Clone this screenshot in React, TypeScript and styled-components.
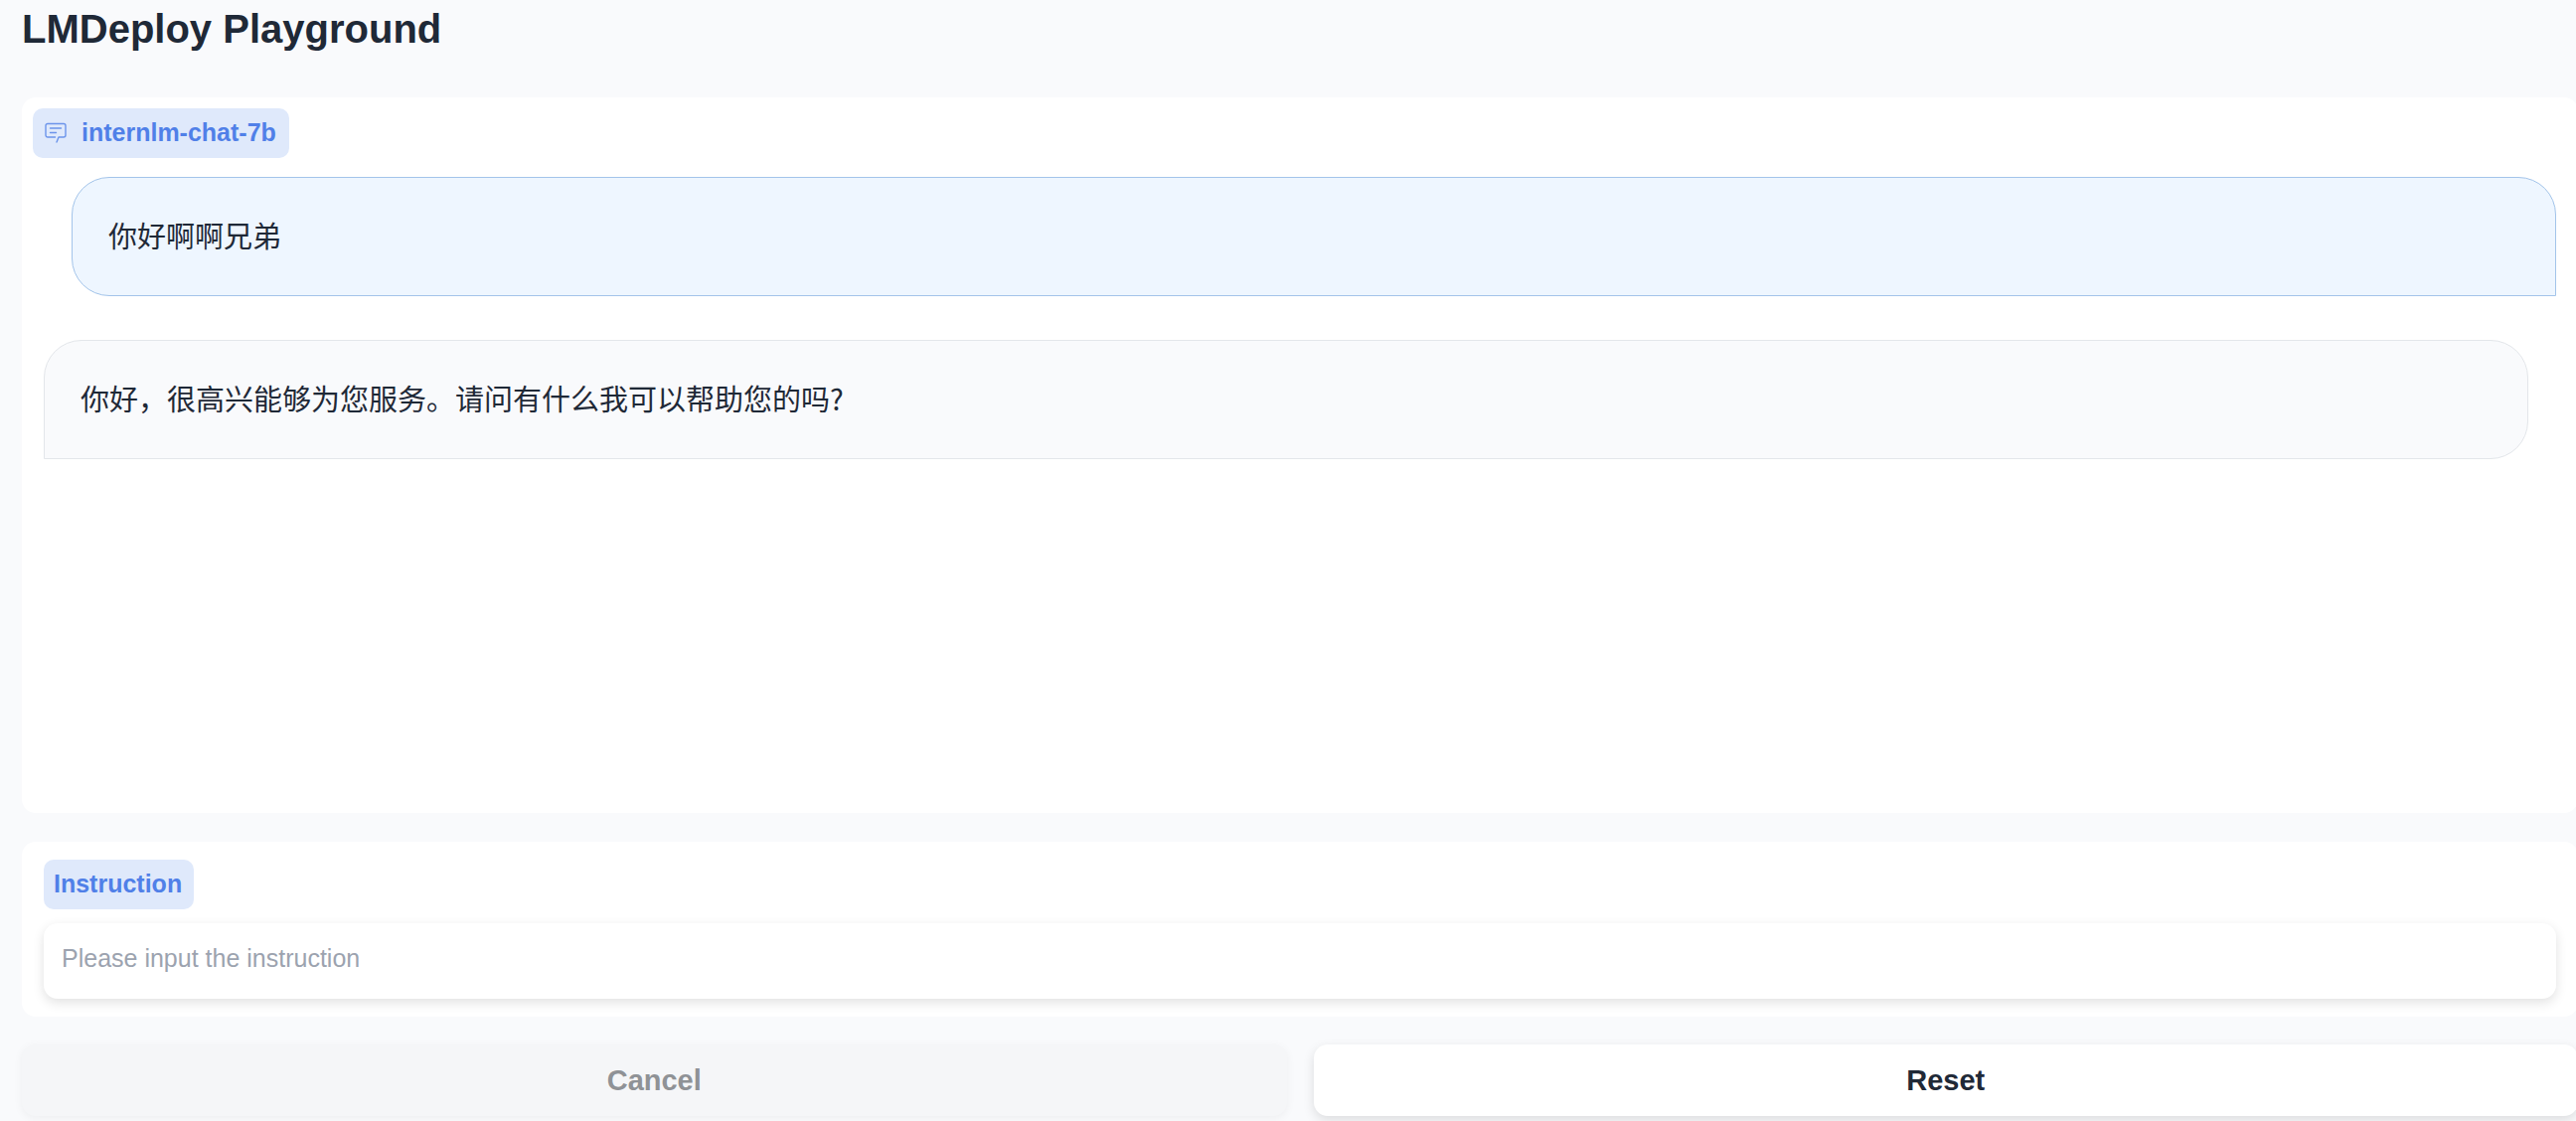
import React, { useState } from "react";
import styled, { createGlobalStyle } from "styled-components";

const GlobalStyle = createGlobalStyle`
  *, *::before, *::after { box-sizing: border-box; }
  body {
    margin: 0;
    background: #f9fafc;
    color: #1f2937;
    font-family: "Liberation Sans", Arial, "Noto Sans CJK SC", sans-serif;
    overflow: hidden;
  }
`;

const Page = styled.main`
  margin-right: -2px;
  padding: 6px 0 5px 22px;
`;

const Title = styled.h1`
  margin: 0 0 46px;
  font-size: 40px;
  line-height: 46px;
  font-weight: 700;
`;

const Panel = styled.section`
  background: #fff;
  border-radius: 14px;
`;

const ChatPanel = styled(Panel)`
  height: 720px;
  padding: 11px;
  margin-bottom: 29px;
`;

const InputPanel = styled(Panel)`
  display: flex;
  flex-direction: column;
  align-items: flex-start;
  gap: 14px;
  padding: 18px 22px;
  margin-bottom: 28px;
`;

const Tag = styled.div`
  display: inline-flex;
  align-items: center;
  gap: 15px;
  height: 50px;
  padding: 0 13px 2px 12px;
  border-radius: 10px;
  background: #dfe9fb;
  color: #5080e8;
  font-size: 25px;
  line-height: 30px;
  font-weight: 700;
`;

const FieldTag = styled(Tag).attrs({ as: "label" })<{ htmlFor?: string }>`
  padding: 0 12px 2px 10px;
`;

const Messages = styled.div`
  display: flex;
  flex-direction: column;
  gap: 44px;
  padding: 19px 11px 0;
`;

const Bubble = styled.div<{ $from: "user" | "bot" }>`
  padding: 35px 36px 39px;
  border: 1px solid ${(p) => (p.$from === "user" ? "#a3c4ea" : "#e3e6ea")};
  border-radius: ${(p) => (p.$from === "user" ? "38px 38px 0 38px" : "38px 38px 38px 0")};
  margin-left: ${(p) => (p.$from === "user" ? "28px" : "0")};
  margin-right: ${(p) => (p.$from === "user" ? "0" : "28px")};
  background: ${(p) => (p.$from === "user" ? "#eef6ff" : "#f9fafc")};
  font-family: "Noto Sans CJK SC", sans-serif;
  font-size: 29px;
  line-height: 44px;
`;

const Instruction = styled.textarea`
  display: block;
  width: 100%;
  height: 76px;
  padding: 19px 18px;
  border: 0;
  border-radius: 14px;
  outline: none;
  resize: none;
  overflow: hidden;
  background: #fff;
  box-shadow: 0 4px 12px rgba(0, 0, 0, 0.12);
  color: inherit;
  font-family: inherit;
  font-size: 25px;
  line-height: 32px;
  &::placeholder { color: #9ca3af; opacity: 1; }
`;

const Actions = styled.div`
  display: grid;
  grid-template-columns: 1fr 1fr;
  gap: 27px;
`;

const Button = styled.button`
  height: 72px;
  border: 0;
  border-radius: 14px;
  background: #fff;
  box-shadow: 0 4px 12px rgba(0, 0, 0, 0.12);
  color: #1f2937;
  font-family: inherit;
  font-size: 29px;
  line-height: 36px;
  font-weight: 700;
  &:disabled {
    background: #f5f6f8;
    box-shadow: 0 2px 10px rgba(0, 0, 0, 0.05);
    color: #8f9296;
  }
`;

const ChatIcon = () => (
  <svg width="22" height="22" viewBox="0 0 22 22" fill="none" stroke="currentColor" strokeWidth="1.4" strokeLinecap="round" strokeLinejoin="round" opacity="0.8" aria-hidden="true">
    <path d="M10.500 16H3a2 2 0 0 1-2-2V4.500a2 2 0 0 1 2-2h16a2 2 0 0 1 2 2V14a2 2 0 0 1-2 2h-5L12 21" />
    <path d="M5.500 7h11M5.500 11.500h6" />
  </svg>
);

const messages: { from: "user" | "bot"; text: string }[] = [
  { from: "user", text: "你好啊啊兄弟" },
  { from: "bot", text: "你好，很高兴能够为您服务。请问有什么我可以帮助您的吗?" },
];

export default function App() {
  const [history, setHistory] = useState(messages);
  const [draft, setDraft] = useState("");
  const reset = () => {
    setHistory([]);
    setDraft("");
  };
  return (
    <>
      <GlobalStyle />
      <Page>
        <Title>LMDeploy Playground</Title>
        <ChatPanel>
          <Tag>
            <ChatIcon />
            internlm-chat-7b
          </Tag>
          <Messages>
            {history.map((m) => (
              <Bubble key={m.text} $from={m.from}>{m.text}</Bubble>
            ))}
          </Messages>
        </ChatPanel>
        <InputPanel>
          <FieldTag htmlFor="instruction">Instruction</FieldTag>
          <Instruction
            id="instruction"
            rows={1}
            placeholder="Please input the instruction"
            value={draft}
            onChange={(e) => setDraft(e.target.value)}
          />
        </InputPanel>
        <Actions>
          <Button type="button" disabled>Cancel</Button>
          <Button type="button" onClick={reset}>Reset</Button>
        </Actions>
      </Page>
    </>
  );
}
